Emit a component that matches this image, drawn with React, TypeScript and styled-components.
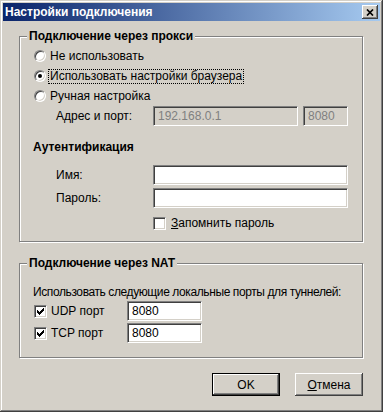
import React from "react";
import styled, { createGlobalStyle, css } from "styled-components";

const Global = createGlobalStyle`
  html, body { margin: 0; padding: 0; background: #D4D0C8; }
  body {
    font-family: "Liberation Sans", Arial, sans-serif;
    font-size: 12px;
    color: #000;
  }
  * { box-sizing: border-box; }
`;

const Window = styled.div`
  width: 383px;
  height: 412px;
  padding: 3px;
  background: #D4D0C8;
  box-shadow: inset -1px -1px #404040, inset 1px 1px #D4D0C8,
    inset -2px -2px #808080, inset 2px 2px #ffffff;
  display: flex;
  flex-direction: column;
`;

const TitleBar = styled.div`
  height: 18px;
  display: flex;
  align-items: center;
  justify-content: space-between;
  padding: 0 2px;
  background: linear-gradient(to right, #0a246a, #a6caf0);
`;

const Title = styled.span`
  color: #fff;
  font-weight: bold;
  font-size: 12px;
  line-height: 14px;
`;

const raised = css`
  background: #d4d0c8;
  border: none;
  box-shadow: inset -1px -1px #404040, inset 1px 1px #ffffff,
    inset -2px -2px #808080, inset 2px 2px #d4d0c8;
`;

const CloseButton = styled.button`
  ${raised};
  width: 16px;
  height: 14px;
  padding: 0;
  display: flex;
  align-items: center;
  justify-content: center;
`;

const Body = styled.div`
  flex: 1;
  display: flex;
  flex-direction: column;
  padding: 8px 17px 0 16px;
`;

const GroupBox = styled.fieldset<{ $bottom: number }>`
  margin: 0;
  min-width: 0;
  padding: 3px 8px ${(p) => p.$bottom}px 7px;
  border: 1px solid #808080;
  box-shadow: 1px 1px 0 #ffffff, inset 1px 1px 0 #ffffff;
  & + & {
    margin-top: 14px;
  }
`;

const Legend = styled.legend`
  padding: 0 2px;
  font-weight: bold;
  line-height: 14px;
  background: #d4d0c8;
`;

const RadioRow = styled.div`
  display: flex;
  align-items: center;
  height: 20px;
  padding-left: 7px;
  gap: 2px;
`;

const sunken = css`
  border: 1px solid;
  border-color: #808080 #ffffff #ffffff #808080;
  box-shadow: inset 1px 1px #404040, inset -1px -1px #d4d0c8;
`;

const RadioCircle = styled.span<{ $checked?: boolean }>`
  ${sunken};
  position: relative;
  flex: none;
  width: 12px;
  height: 12px;
  border-radius: 50%;
  background: #fff;
  ${(p) =>
    p.$checked &&
    css`
      &::after {
        content: "";
        position: absolute;
        left: 3px;
        top: 3px;
        width: 4px;
        height: 4px;
        border-radius: 50%;
        background: #000;
      }
    `}
`;

const OptionText = styled.span<{ $focused?: boolean }>`
  padding: 0 1px;
  line-height: 13px;
  border: 1px dotted ${(p) => (p.$focused ? "#000" : "transparent")};
`;

const FieldRow = styled.div<{ $mt?: number }>`
  display: flex;
  align-items: center;
  height: 20px;
  gap: 5px;
  padding-left: 29px;
  margin-top: ${(p) => p.$mt ?? 0}px;
`;

const FieldLabel = styled.label`
  width: 92px;
  flex: none;
`;

const TextBox = styled.input<{ $w: number }>`
  ${sunken};
  width: ${(p) => p.$w}px;
  height: 20px;
  padding: 0 4px;
  font: inherit;
  font-size: 12px;
  background: #fff;
  color: #000;
  outline: none;
  &:disabled {
    background: #d4d0c8;
    color: #808080;
  }
`;

const SubHeading = styled.div`
  font-weight: bold;
  line-height: 14px;
  padding-left: 6px;
  margin-top: 14px;
`;

const Note = styled.div`
  line-height: 14px;
  padding-left: 6px;
  margin-top: 12px;
  white-space: nowrap;
  letter-spacing: -0.4px;
`;

const CheckRow = styled.div<{ $indent: number; $mt: number; $gap: number }>`
  display: flex;
  align-items: center;
  height: 20px;
  padding-left: ${(p) => p.$indent}px;
  margin-top: ${(p) => p.$mt}px;
  gap: ${(p) => p.$gap}px;
`;

const CheckBoxBox = styled.span`
  ${sunken};
  flex: none;
  width: 13px;
  height: 13px;
  background: #fff;
  display: flex;
  align-items: center;
  justify-content: center;
`;

const PortLabel = styled.label`
  width: 72px;
  flex: none;
`;

const ButtonRow = styled.div`
  display: flex;
  justify-content: flex-end;
  gap: 15px;
  margin-top: 15px;
`;

const PushButton = styled.button<{ $default?: boolean }>`
  width: 68px;
  height: 23px;
  padding: 0;
  font: inherit;
  font-size: 12px;
  color: #000;
  background: #d4d0c8;
  border: none;
  ${(p) =>
    p.$default
      ? css`
          box-shadow: inset 0 0 0 1px #000000, inset -2px -2px #404040,
            inset 2px 2px #ffffff, inset -3px -3px #808080;
        `
      : css`
          box-shadow: inset -1px -1px #404040, inset 1px 1px #ffffff,
            inset -2px -2px #808080, inset 2px 2px #d4d0c8;
        `}
`;

const CheckMark = () => (
  <svg width="7" height="7" viewBox="0 0 7 7" shapeRendering="crispEdges">
    <path d="M0 2 L2 4 L6 0 L7 0 L7 2 L2 7 L0 5 Z" fill="#000" />
  </svg>
);

const CheckBox = ({ checked }: { checked?: boolean }) => (
  <CheckBoxBox>{checked && <CheckMark />}</CheckBoxBox>
);

const CloseGlyph = () => (
  <svg width="8" height="7" viewBox="0 0 8 7">
    <path d="M1 0.5 L7 6.5 M7 0.5 L1 6.5" stroke="#000" strokeWidth="1.7" fill="none" />
  </svg>
);

export default function App() {
  return (
    <>
      <Global />
      <Window>
        <TitleBar>
          <Title>Настройки подключения</Title>
          <CloseButton aria-label="Закрыть">
            <CloseGlyph />
          </CloseButton>
        </TitleBar>
        <Body>
          <GroupBox $bottom={8}>
            <Legend>Подключение через прокси</Legend>
            <RadioRow>
              <RadioCircle />
              <OptionText>Не использовать</OptionText>
            </RadioRow>
            <RadioRow>
              <RadioCircle $checked />
              <OptionText $focused>Использовать настройки браузера</OptionText>
            </RadioRow>
            <RadioRow>
              <RadioCircle />
              <OptionText>Ручная настройка</OptionText>
            </RadioRow>
            <FieldRow>
              <FieldLabel>Адрес и порт:</FieldLabel>
              <TextBox $w={145} disabled defaultValue="192.168.0.1" />
              <TextBox $w={45} disabled defaultValue="8080" />
            </FieldRow>
            <SubHeading>Аутентификация</SubHeading>
            <FieldRow $mt={11}>
              <FieldLabel>Имя:</FieldLabel>
              <TextBox $w={195} defaultValue="" />
            </FieldRow>
            <FieldRow $mt={3}>
              <FieldLabel>Пароль:</FieldLabel>
              <TextBox $w={195} type="password" defaultValue="" />
            </FieldRow>
            <CheckRow $indent={126} $mt={5} $gap={5}>
              <CheckBox />
              <span>
                <u>З</u>апомнить пароль
              </span>
            </CheckRow>
          </GroupBox>
          <GroupBox $bottom={14}>
            <Legend>Подключение через NAT</Legend>
            <Note>Использовать следующие локальные порты для туннелей:</Note>
            <CheckRow $indent={7} $mt={2} $gap={4}>
              <CheckBox checked />
              <PortLabel>UDP порт</PortLabel>
              <TextBox $w={75} defaultValue="8080" />
            </CheckRow>
            <CheckRow $indent={7} $mt={2} $gap={4}>
              <CheckBox checked />
              <PortLabel>TCP порт</PortLabel>
              <TextBox $w={75} defaultValue="8080" />
            </CheckRow>
          </GroupBox>
          <ButtonRow>
            <PushButton $default>OK</PushButton>
            <PushButton>
              <u>О</u>тмена
            </PushButton>
          </ButtonRow>
        </Body>
      </Window>
    </>
  );
}
